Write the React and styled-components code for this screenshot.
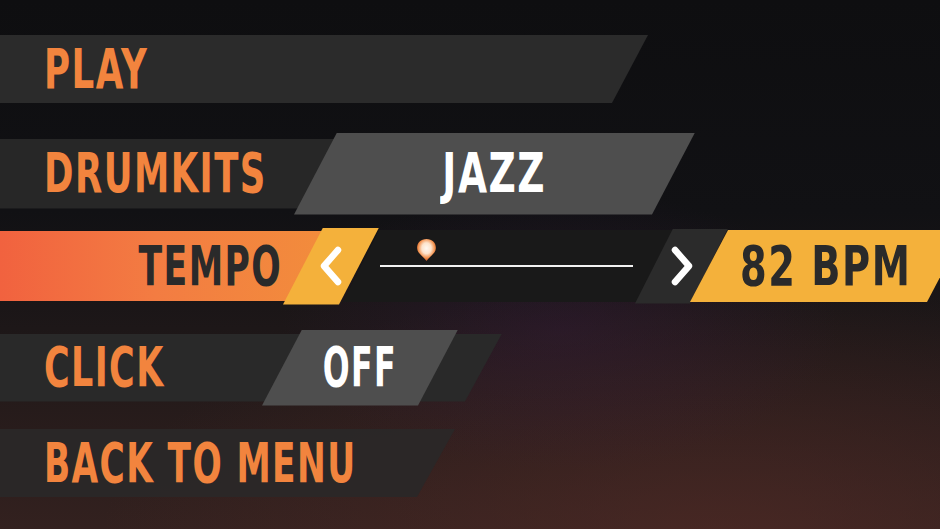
import React from "react";
import styled, { createGlobalStyle } from "styled-components";

const GlobalStyle = createGlobalStyle`
  html, body {
    margin: 0;
    padding: 0;
    background: #0f0f11;
  }
  #root {
    width: 940px;
    height: 529px;
  }
`;

const slant = (cut) => `polygon(${cut}px 0, 100% 0, calc(100% - ${cut}px) 100%, 0 100%)`;
const rightSlant = (cut) => `polygon(0 0, 100% 0, calc(100% - ${cut}px) 100%, 0 100%)`;

const Screen = styled.div`
  width: 940px;
  height: 529px;
  overflow: hidden;
  box-sizing: border-box;
  padding-top: 34px;
  display: flex;
  flex-direction: column;
  gap: 28.5px;
  font-family: "Liberation Sans Narrow", "DejaVu Sans Condensed", "Liberation Sans", sans-serif;
  background:
    radial-gradient(ellipse 280px 140px at 560px 330px, rgba(58, 28, 66, 0.35), transparent),
    radial-gradient(ellipse 620px 260px at 720px 540px, rgba(92, 46, 40, 0.5), transparent),
    linear-gradient(180deg, #0e0e10 0%, #111114 40%, #1d1718 62%, #33211f 100%);
`;

const Row = styled.div`
  height: 70px;
  display: flex;
  align-items: center;
  flex-shrink: 0;
`;

const Stack = styled(Row)`
  display: grid;
  grid-template-areas: "stack";
  align-items: center;
  & > * {
    grid-area: stack;
  }
`;

const Bar = styled.div`
  justify-self: start;
  width: ${(p) => p.$width}px;
  height: ${(p) => p.$height || 69}px;
  background: ${(p) => p.$bg || "#2a2a2a"};
  clip-path: ${(p) => rightSlant(p.$cut || 37)};
  display: flex;
  align-items: center;
  padding-left: 44px;
  box-sizing: border-box;
  flex-shrink: 0;
`;

const Label = styled.span`
  display: inline-block;
  font-size: 55px;
  font-weight: 700;
  line-height: 1;
  letter-spacing: 2px;
  color: ${(p) => p.$color || "#f2843e"};
  transform: scaleX(${(p) => p.$squeeze || 0.71});
  transform-origin: ${(p) => p.$origin || "left"} center;
  white-space: nowrap;
`;

const Choice = styled.div`
  justify-self: start;
  margin-left: ${(p) => p.$left}px;
  width: ${(p) => p.$width}px;
  height: ${(p) => p.$height}px;
  background: #4e4e4e;
  clip-path: ${(p) => slant(p.$cut)};
  display: flex;
  align-items: center;
  justify-content: center;
`;

const TempoBar = styled.div`
  width: 345px;
  height: 70px;
  flex-shrink: 0;
  background: linear-gradient(90deg, #f1623f 0%, #f37c42 45%, #f28e3b 100%);
  clip-path: ${rightSlant(36)};
  display: flex;
  align-items: center;
  justify-content: flex-end;
  padding-right: 63px;
  box-sizing: border-box;
`;

const Tab = styled.div`
  flex-shrink: 0;
  margin-left: ${(p) => p.$overlap}px;
  width: ${(p) => p.$width}px;
  height: ${(p) => p.$height}px;
  background: ${(p) => p.$bg};
  clip-path: ${(p) => slant(p.$cut)};
  display: flex;
  align-items: center;
  justify-content: center;
  padding-right: ${(p) => p.$padRight || 0}px;
  box-sizing: border-box;
`;

const SliderBay = styled.div`
  flex-shrink: 0;
  margin-left: -36px;
  width: 330px;
  height: 72px;
  background: #191919;
  clip-path: ${slant(36)};
  display: flex;
  align-items: center;
  padding: 0 40px 0 37px;
  box-sizing: border-box;
`;

const Track = styled.div`
  position: relative;
  flex: 1;
  height: 2px;
  background: #f2f2f2;
`;

const Thumb = styled.svg`
  position: absolute;
  left: ${(p) => p.$at}px;
  top: -27px;
  width: 21px;
  height: 24px;
  overflow: visible;
`;

const Chevron = ({ dir }) => (
  <svg width="26" height="42" viewBox="0 0 26 42">
    <polyline
      points={dir === "left" ? "20,5 6,21 20,37" : "6,5 20,21 6,37"}
      fill="none"
      stroke="#ffffff"
      strokeWidth="6.5"
      strokeLinecap="round"
      strokeLinejoin="round"
    />
  </svg>
);

export default function App() {
  return (
    <>
      <GlobalStyle />
      <Screen>
        <Row>
          <Bar $width={648} $height={68} $cut={36} $bg="#2b2b2b">
            <Label $squeeze={0.72}>PLAY</Label>
          </Bar>
        </Row>

        <Stack>
          <Bar $width={340} $height={70} $bg="#272727">
            <Label $squeeze={0.717}>DRUMKITS</Label>
          </Bar>
          <Choice $left={294} $width={401} $height={82} $cut={43}>
            <Label $color="#ffffff" $origin="center" $squeeze={0.76}>JAZZ</Label>
          </Choice>
        </Stack>

        <Row>
          <TempoBar>
            <Label $color="#2a2a2a" $origin="right" $squeeze={0.7}>TEMPO</Label>
          </TempoBar>
          <Tab $overlap={-62} $width={96} $height={77} $cut={40} $bg="#f4b13b">
            <Chevron dir="left" />
          </Tab>
          <SliderBay>
            <Track>
              <Thumb $at={36} viewBox="0 0 20 23">
                <defs>
                  <radialGradient id="pinGlow" cx="50%" cy="42%" r="55%">
                    <stop offset="0%" stopColor="#fff8f0" />
                    <stop offset="45%" stopColor="#fde4cc" />
                    <stop offset="80%" stopColor="#f2904c" />
                    <stop offset="100%" stopColor="#c8602c" />
                  </radialGradient>
                </defs>
                <path
                  d="M10 1 C15.5 1 19 4.5 19 9.5 C19 14 15 16 10 22 C5 16 1 14 1 9.5 C1 4.5 4.5 1 10 1 Z"
                  fill="url(#pinGlow)"
                />
              </Thumb>
            </Track>
          </SliderBay>
          <Tab $overlap={-38} $width={93} $height={75} $cut={38} $bg="#2b2b2b">
            <Chevron dir="right" />
          </Tab>
          <Tab $overlap={-38} $width={275} $height={72} $cut={38} $bg="#f4b13b" $padRight={4}>
            <Label $color="#2a2a2a" $origin="center" $squeeze={0.775}>82 BPM</Label>
          </Tab>
        </Row>

        <Stack>
          <Bar $width={502} $cut={37} $height={68} $bg="#292929">
            <Label $squeeze={0.706}>CLICK</Label>
          </Bar>
          <Choice $left={262} $width={196} $height={76} $cut={40}>
            <Label $color="#ffffff" $origin="center" $squeeze={0.64}>OFF</Label>
          </Choice>
        </Stack>

        <Row>
          <Bar $width={455} $cut={38} $height={68} $bg="rgba(42, 40, 40, 0.92)">
            <Label $squeeze={0.695}>BACK TO MENU</Label>
          </Bar>
        </Row>
      </Screen>
    </>
  );
}
